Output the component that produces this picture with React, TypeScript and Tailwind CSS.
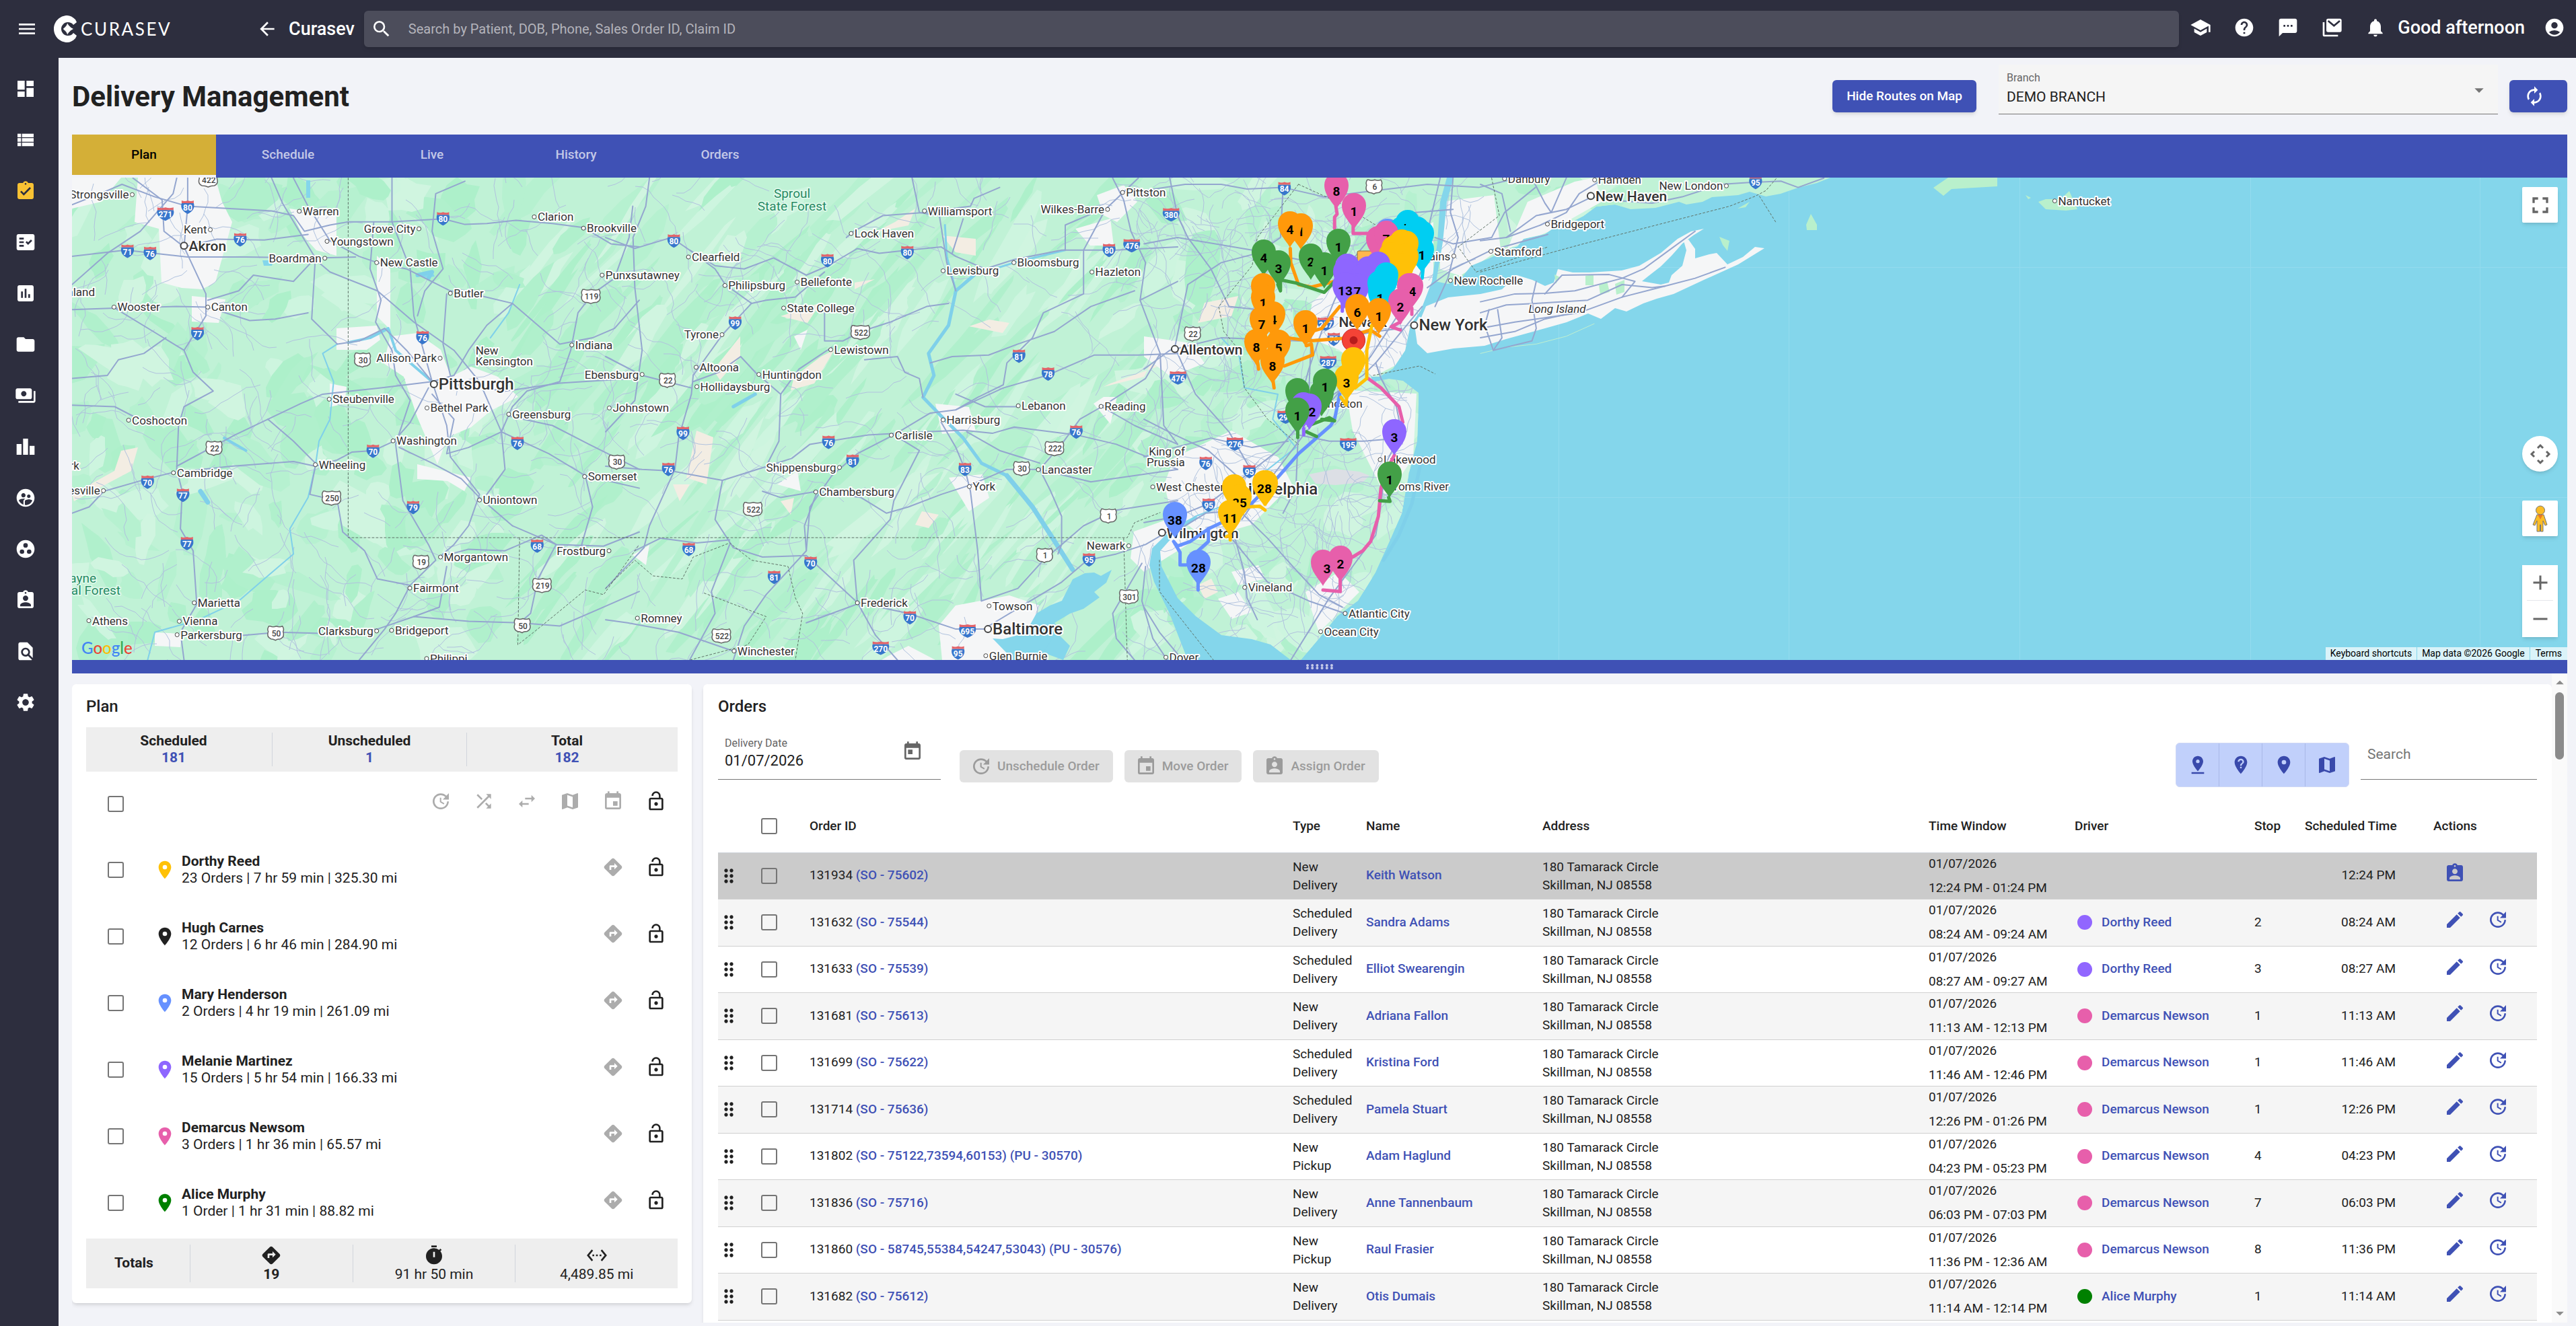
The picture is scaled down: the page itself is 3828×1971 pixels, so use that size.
import type { ReactNode } from "react";
import type { IconType } from "react-icons";
import {
  MdAccountCircle,
  MdAdd,
  MdArrowBack,
  MdArrowDropDown,
  MdArrowDropUp,
  MdAssessment,
  MdAssignmentInd,
  MdAssignmentTurnedIn,
  MdAutorenew,
  MdDashboard,
  MdDirections,
  MdDragIndicator,
  MdEdit,
  MdEvent,
  MdFactCheck,
  MdFindInPage,
  MdFolder,
  MdFullscreen,
  MdGroupWork,
  MdHelp,
  MdLeaderboard,
  MdLocationOn,
  MdLockOpen,
  MdMap,
  MdMenu,
  MdNotListedLocation,
  MdNotifications,
  MdPayments,
  MdPinDrop,
  MdRemove,
  MdSchool,
  MdSearch,
  MdSettings,
  MdSettingsEthernet,
  MdShuffle,
  MdSms,
  MdSupervisedUserCircle,
  MdSwapHoriz,
  MdToday,
  MdUpdate,
  MdViewList,
} from "react-icons/md";
import { clsx } from "clsx";

const NAV_ITEMS: { label: string; icon: IconType; active?: boolean }[] = [
  { label: "Dashboard", icon: MdDashboard },
  { label: "List", icon: MdViewList },
  { label: "Deliveries", icon: MdAssignmentTurnedIn, active: true },
  { label: "Checks", icon: MdFactCheck },
  { label: "Assessment", icon: MdAssessment },
  { label: "Files", icon: MdFolder },
  { label: "Payments", icon: MdPayments },
  { label: "Leaderboard", icon: MdLeaderboard },
  { label: "Users", icon: MdSupervisedUserCircle },
  { label: "Groups", icon: MdGroupWork },
  { label: "Patients", icon: MdAssignmentInd },
  { label: "Find", icon: MdFindInPage },
  { label: "Settings", icon: MdSettings },
];

const TABS = ["Plan", "Schedule", "Live", "History", "Orders"];

const DRIVERS = [
  { name: "Dorthy Reed", info: "23 Orders | 7 hr 59 min | 325.30 mi", pin: "text-[#ffc107]" },
  { name: "Hugh Carnes", info: "12 Orders | 6 hr 46 min | 284.90 mi", pin: "text-[#212121]" },
  { name: "Mary Henderson", info: "2 Orders | 4 hr 19 min | 261.09 mi", pin: "text-[#6691ff]" },
  { name: "Melanie Martinez", info: "15 Orders | 5 hr 54 min | 166.33 mi", pin: "text-[#8e66ff]" },
  { name: "Demarcus Newsom", info: "3 Orders | 1 hr 36 min | 65.57 mi", pin: "text-[#e75fab]" },
  { name: "Alice Murphy", info: "1 Order | 1 hr 31 min | 88.82 mi", pin: "text-[#008000]" },
];

interface Order {
  id: string;
  refs: string;
  type: [string, string];
  name: string;
  window: string;
  driver?: string;
  dot?: string;
  stop?: string;
  time: string;
}

const PURPLE = "bg-[#9166ff]";
const PINK = "bg-[#e75fab]";

const ORDERS: Order[] = [
  { id: "131934", refs: "(SO - 75602)", type: ["New", "Delivery"], name: "Keith Watson", window: "12:24 PM - 01:24 PM", time: "12:24 PM" },
  { id: "131632", refs: "(SO - 75544)", type: ["Scheduled", "Delivery"], name: "Sandra Adams", window: "08:24 AM - 09:24 AM", driver: "Dorthy Reed", dot: PURPLE, stop: "2", time: "08:24 AM" },
  { id: "131633", refs: "(SO - 75539)", type: ["Scheduled", "Delivery"], name: "Elliot Swearengin", window: "08:27 AM - 09:27 AM", driver: "Dorthy Reed", dot: PURPLE, stop: "3", time: "08:27 AM" },
  { id: "131681", refs: "(SO - 75613)", type: ["New", "Delivery"], name: "Adriana Fallon", window: "11:13 AM - 12:13 PM", driver: "Demarcus Newson", dot: PINK, stop: "1", time: "11:13 AM" },
  { id: "131699", refs: "(SO - 75622)", type: ["Scheduled", "Delivery"], name: "Kristina Ford", window: "11:46 AM - 12:46 PM", driver: "Demarcus Newson", dot: PINK, stop: "1", time: "11:46 AM" },
  { id: "131714", refs: "(SO - 75636)", type: ["Scheduled", "Delivery"], name: "Pamela Stuart", window: "12:26 PM - 01:26 PM", driver: "Demarcus Newson", dot: PINK, stop: "1", time: "12:26 PM" },
  { id: "131802", refs: "(SO - 75122,73594,60153) (PU - 30570)", type: ["New", "Pickup"], name: "Adam Haglund", window: "04:23 PM - 05:23 PM", driver: "Demarcus Newson", dot: PINK, stop: "4", time: "04:23 PM" },
  { id: "131836", refs: "(SO - 75716)", type: ["New", "Delivery"], name: "Anne Tannenbaum", window: "06:03 PM - 07:03 PM", driver: "Demarcus Newson", dot: PINK, stop: "7", time: "06:03 PM" },
  { id: "131860", refs: "(SO - 58745,55384,54247,53043) (PU - 30576)", type: ["New", "Pickup"], name: "Raul Frasier", window: "11:36 PM - 12:36 AM", driver: "Demarcus Newson", dot: PINK, stop: "8", time: "11:36 PM" },
  { id: "131682", refs: "(SO - 75612)", type: ["New", "Delivery"], name: "Otis Dumais", window: "11:14 AM - 12:14 PM", driver: "Alice Murphy", dot: "bg-[#008000]", stop: "1", time: "11:14 AM" },
];

/* ---------- Map data ---------- */

// Each sheet has its own grid; `x`/`y` is its origin and `kx`/`ky` its scale on the map
const SHEETS = {
  west: { x: 100, y: 260, kx: 0.5421, ky: 0.4656 },
  central: { x: 900, y: 260, kx: 0.5421, ky: 0.4656 },
  jersey: { x: 1700, y: 260, kx: 0.3827, ky: 0.4656 },
  coast: { x: 2200, y: 260, kx: 0.6378, ky: 0.4656 },
};

type Sheet = keyof typeof SHEETS;

function place(sheet: Sheet, x: number, y: number): [number, number] {
  const s = SHEETS[sheet];
  return [s.x + x * s.kx, s.y + y * s.ky];
}

function line(sheet: Sheet, coords: string): string {
  return coords
    .split(" ")
    .map((pair) => {
      const [x, y] = pair.split(",").map(Number);
      return place(sheet, x, y).map((n) => n.toFixed(1)).join(",");
    })
    .join(" ");
}

const MAINLAND =
  "M107 264H2720L2700 272 2672 279 2646 288 2624 292 2600 285 2583 290 2544 293 2530 300 2506 304 2495 300 2460 309 2423 311 2400 304 2372 307 2353 321 2328 334 2310 338 2296 348 2264 355 2255 366 2238 372 2213 384 2186 395 2171 414 2152 422 2132 418 2125 437 2112 460 2096 483 2088 521 2070 548 2050 560 2037 560 2040 568 2064 563 2085 566 2108 584 2108 600 2106 656 2094 702 2083 763 2067 800 2044 851 2018 893 1987 916 1960 949 1933 981H107Z";

const ISLANDS = [
  "M2152 442L2200 437 2232 430 2254 409 2277 416 2296 425 2309 420 2315 400 2337 405 2362 405 2410 402 2436 395 2468 376 2493 355 2513 344 2532 340 2516 350 2500 362 2484 380 2468 396 2450 410 2440 418 2468 423 2480 420 2484 409 2500 395 2506 372 2502 358 2509 356 2519 370 2519 384 2540 378 2551 376 2567 393 2590 382 2608 367 2622 369 2583 393 2532 416 2487 437 2462 444 2442 451 2417 463 2400 458 2379 474 2360 466 2328 479 2296 488 2238 504 2206 514 2160 518 2121 525 2106 511 2102 483 2117 456Z",
];

const GREEN_ISLANDS = [
  "M2873 279L2888 291 2900 281 2968 277V264H2895Z",
  "M3029 300L3040 296 3062 296 3075 284 3087 311 3070 313 3040 311Z",
  "M2691 318L2700 334 2700 342 2685 342 2684 334Z",
  "M2555 352L2570 358 2567 373 2560 364Z",
  "M2582 310L2600 300 2594 308Z",
  "M3010 290L3018 294 3014 296Z",
];

const WATER = [
  "M1918 981L1888 958 1860 950 1815 944 1777 916 1750 889 1726 842 1724 819 1748 792 1780 770 1776 767 1744 784 1712 815 1708 840 1715 865 1738 912 1765 981Z",
  "M1594 861L1612 852 1626 851 1636 856 1652 847 1644 866 1626 880 1634 888 1610 905 1590 912 1567 926 1580 940 1572 949 1550 981H1506L1475 949 1490 950 1513 944 1530 930 1540 912 1560 900 1578 893Z",
  "M2150 264L2140 300 2136 360 2128 418 2108 470 2112 472 2134 420 2144 360 2150 300 2160 264Z",
  "M455 268h6v26h-6zM392 395h12l2-8h-16zM622 407l20-4 4 8-16 2zM1550 970l20-30 20 20-10 21z",
];

const URBAN = [
  "M205 264H320L330 300 345 330 320 420 300 430 270 428 240 420 236 340 200 330Z",
  "M107 264H180L150 300 107 310Z",
  "M430 310L500 320 500 380 470 372 450 350 440 330Z",
  "M285 440L335 445 325 480 285 478Z",
  "M500 488L560 484 565 505 545 520 500 520Z",
  "M580 500L620 495 655 520 670 560 700 545 740 560 770 590 730 610 700 635 665 650 650 690 620 620 600 560 570 540Z",
  "M490 570L515 575 512 600 490 605Z",
  "M560 380L580 400 580 490 560 470Z",
  "M620 690L700 710 690 730 665 715 620 712Z",
  "M230 940L270 942 268 962 230 960Z",
  "M1598 340L1650 325 1655 365 1620 365Z",
  "M1630 290L1670 275 1690 300 1660 330 1640 320Z",
  "M1700 500L1770 510 1790 540 1740 560 1700 530Z",
  "M1640 590L1660 590 1650 630 1625 600Z",
  "M1390 600L1440 605 1450 640 1400 645Z",
  "M1410 710L1460 705 1470 740 1440 760Z",
  "M1685 790L1740 770 1780 800 1700 850 1680 830Z",
  "M1745 680L1830 640 1900 680 1920 720 1860 780 1790 800 1740 760 1730 720Z",
  "M1420 900L1500 885 1545 900 1530 940 1490 981H1400L1395 930Z",
  "M1320 975L1350 960 1390 981H1310Z",
  "M1980 420L2060 370 2130 330 2130 480 2080 540 2040 560 1990 520 1940 500 1950 450Z",
  "M2000 580L2105 585 2100 680 2060 740 2040 700 2010 640Z",
  "M2140 300L2220 290 2230 370 2170 410 2140 400Z",
  "M2270 300L2340 270 2370 264 2380 300 2300 345 2240 370Z",
  "M1940 880L1990 850 2020 880 1960 940Z",
  "M1810 890L1840 880 1860 910 1830 920Z",
  "M1830 850L1870 840 1880 860 1840 870Z",
  "M1180 500L1200 490 1190 520Z",
  "M1155 720L1185 700 1190 730Z",
  "M940 825L965 810 960 840Z",
];

const SAND = [
  "M180 670L205 665 195 700 110 745 107 735 170 700Z",
  "M1035 640L1060 650 1050 720 1020 710Z",
  "M1180 560L1220 530 1240 520 1210 570 1175 580Z",
  "M1160 470L1220 450 1200 480Z",
  "M1060 550L1100 500 1100 530 1070 565Z",
  "M1330 330L1360 310 1350 335 1300 345Z",
  "M1400 350L1450 355 1450 380 1420 375Z",
  "M1270 420L1300 415 1270 430Z",
  "M1470 475L1500 480 1490 495 1440 485Z",
  "M1700 560L1710 540 1720 545 1650 570 1640 575Z",
  "M1370 760L1395 765 1380 785 1360 780Z",
  "M1160 745L1180 740 1175 765Z",
  "M1000 720L1025 720 1010 745Z",
  "M1780 870L1800 860 1810 880 1790 890Z",
  "M1790 450L1840 440 1830 470 1780 480Z",
];

const HIGHWAYS: [Sheet, string][] = [
  ["west", "13,95 90,60 150,30 240,70 330,100 560,115 620,130 650,180 720,160 770,150 890,150 1030,140 1090,158 1150,155 1230,145 1330,155 1415,168 1490,220 1568,230"],
  ["west", "13,350 110,250 200,180 290,60 300,10"],
  ["west", "13,260 160,240 330,262 490,262 680,265 790,262"],
  ["west", "180,10 260,80 265,180 320,230 410,205 540,208 660,190"],
  ["west", "330,10 330,100 320,230 380,380 380,450 320,560 345,630 400,690 320,740 305,800 300,940 315,1010 310,1130 345,1200 355,1370 310,1460 320,1549"],
  ["west", "13,1080 60,1060 100,1010 220,970 290,950 450,930 620,915 680,930 740,910 780,885 840,880 895,850 940,790 990,680"],
  ["west", "840,150 830,300 860,400 845,470 890,560 900,640 940,720 900,860 920,1040 990,1180 1010,1230 940,1310 900,1400 870,1450 800,1549"],
  ["west", "620,10 660,100 720,210 800,260 850,280 930,300 1050,370"],
  ["west", "680,270 720,310 850,370 950,470 1060,560 1130,660 1190,820 1320,890 1420,960 1568,1000"],
  ["west", "560,10 590,90 680,265 670,460 740,540 800,530 870,490 930,560 1000,660"],
  ["west", "1000,660 1060,640 1100,560 1150,480 1220,410 1350,540 1440,520 1500,490 1568,400"],
  ["west", "1050,370 1130,385 1220,410"],
  ["west", "890,10 890,150 940,300 950,450 1000,660 1040,800 1050,900 1130,1020 1100,1120 1060,1180 1020,1220"],
  ["west", "910,870 1000,920 1080,970 1130,1030 1220,1120 1340,1180"],
  ["west", "1020,1220 1100,1195 1200,1200 1300,1150 1340,1180 1470,1185 1568,1140"],
  ["west", "550,780 640,730 700,700 860,680 1000,660 1200,690 1350,665 1480,655 1568,650"],
  ["west", "550,780 620,850 680,920"],
  ["west", "13,735 130,740 180,770"],
  ["west", "550,780 460,830 300,930"],
  ["west", "13,430 130,425 300,420 385,422 500,465 570,460 660,440"],
  ["west", "130,425 250,510 320,560"],
  ["west", "385,400 470,370 510,320 620,340 680,265"],
  ["west", "13,650 110,640 140,590 210,570 270,520"],
  ["west", "320,1470 480,1470 580,1460 730,1465 850,1450 950,1410 1100,1425 1240,1430 1350,1440 1450,1390 1568,1330"],
  ["west", "680,930 665,1020 740,1040 755,1140 815,1200 850,1290 940,1310"],
  ["west", "1340,1180 1290,1290 1270,1400 1240,1430"],
  ["west", "1420,960 1440,1060 1410,1180"],
  ["west", "1190,820 1220,740 1260,690 1350,660 1380,560 1400,440 1440,380 1500,330 1540,200 1550,100"],
  ["west", "1190,820 1100,870 1040,890 1060,780 1000,700"],
  ["west", "1210,770 1330,800 1430,860 1568,940"],
  ["west", "960,450 980,370 1030,300 1000,180 1010,60 1090,20"],
  ["west", "1040,380 1030,540 1050,640"],
  ["west", "1150,1020 1200,940 1190,820"],
  ["west", "950,1410 1020,1380 1040,1250"],
  ["central", "0,200 80,235 180,200 230,240 300,290 380,300 460,265 550,320 610,290 690,235 750,250 830,240 920,230 960,260 1040,300 1120,270 1250,240 1400,240 1568,230"],
  ["central", "328,350 400,410 320,510 240,640 235,700 200,840 190,940 120,1120 105,1190 0,1320"],
  ["central", "230,240 300,300 328,350"],
  ["central", "400,410 440,400 520,390 600,310"],
  ["central", "0,930 100,940 180,945 320,975 430,935 510,905 560,860 720,830 880,820 980,815 1060,825 1120,805 1290,830 1400,860 1568,940"],
  ["central", "350,1549 380,1440 440,1340 550,1200 560,1060 620,960 690,890 790,830 890,760 960,750 1020,710 1090,670 1100,600 1170,520 1200,440 1310,380 1310,240 1370,110 1460,10"],
  ["central", "960,750 1090,680 1210,640 1340,575 1460,575 1568,570"],
  ["central", "1390,10 1420,80 1440,180 1480,280 1465,400 1520,570 1530,800 1568,860"],
  ["central", "920,790 960,870 985,940 1000,1010 1020,1200 1030,1360"],
  ["central", "320,975 300,1100 350,1190 430,1220 550,1215 620,1290 690,1365 830,1400 960,1450 1050,1450"],
  ["central", "80,1200 150,1160 250,1175 340,1165"],
  ["central", "690,1365 680,1230 780,1100 790,1040 860,880 790,830"],
  ["central", "690,1365 740,1470 800,1549"],
  ["central", "1050,1440 1150,1370 1250,1300 1320,1230 1400,1210 1480,1180 1568,1120"],
  ["central", "600,440 600,530 650,530 700,500 780,470 880,420 940,410"],
  ["central", "440,930 475,850 480,700 530,620 620,550"],
  ["central", "660,200 680,180 760,130 870,120"],
  ["central", "840,10 860,120 915,130 935,280 960,370"],
  ["central", "870,120 1000,100 1010,75 1080,40"],
  ["central", "980,140 950,250"],
  ["central", "430,1010 480,1030 580,1010 700,1030 770,1080 830,1060 920,1020 1000,990 1100,940 1190,940 1330,980 1568,940"],
  ["central", "1190,940 1250,860 1300,780 1360,740 1480,650 1520,570"],
  ["central", "1360,740 1450,800 1568,860"],
  ["central", "1190,940 1220,1010 1250,1090 1250,1180 1240,1210"],
  ["central", "1030,1360 1130,1320 1200,1230 1310,1120 1400,1070 1568,1040"],
  ["central", "120,10 110,100 75,200 80,360 100,560 80,720 0,820"],
  ["central", "0,1420 60,1430 200,1460 350,1520"],
  ["central", "240,660 310,630 370,580 410,630 480,700"],
  ["central", "0,580 100,640 235,680"],
  ["central", "890,600 950,580 1050,575 1130,540 1230,500 1330,420 1450,370"],
  ["central", "710,590 800,580 820,630 860,650 870,710"],
  ["central", "960,700 1040,740 1130,740"],
  ["central", "990,820 1080,880 1190,920"],
  ["central", "1450,1549 1400,1480 1390,1400 1470,1240"],
  ["central", "1480,1250 1470,1360 1500,1480 1540,1549"],
  ["central", "550,1430 690,1370"],
  ["central", "550,1200 545,1120 580,1010"],
  ["central", "230,1549 300,1400 290,1330 340,1180"],
  ["central", "1260,240 1260,160 1340,120"],
  ["central", "1465,400 1568,340"],
  ["jersey", "0,1110 130,1090 250,1050 330,1000 410,950 520,880 600,800"],
  ["jersey", "0,620 100,560 300,520 600,530 770,520 900,500 1000,490"],
  ["jersey", "0,220 130,200 420,240 600,270 800,260 1000,290"],
  ["jersey", "600,740 640,620 690,500 740,400 820,260 900,180 1050,120 1200,110"],
  ["jersey", "380,1100 500,960 620,830 760,690 880,580 960,480 1040,380 1080,300 1110,150 1150,10"],
  ["jersey", "1080,420 980,520 900,600 920,650 980,740 1000,820 940,920 920,1050 900,1150 810,1250 720,1350 570,1549"],
  ["jersey", "380,1080 480,1160 600,1270 680,1340 770,1380"],
  ["jersey", "340,1120 390,1270 400,1350 440,1420"],
  ["jersey", "600,830 720,850 850,850 1010,840"],
  ["jersey", "0,50 160,30 300,30 400,45 540,40 700,70 900,50 1100,30 1300,40 1450,10"],
  ["jersey", "100,10 130,130 170,200 260,300 330,420 440,430"],
  ["jersey", "540,40 530,200 440,250 300,280 170,350 120,550"],
  ["jersey", "650,500 640,700 600,800 590,1000 540,1080"],
  ["jersey", "120,550 200,700 330,820 400,920 460,1000"],
  ["jersey", "0,780 120,830 250,880 360,960"],
  ["jersey", "0,900 120,870 260,840 420,870 560,850"],
  ["jersey", "120,1140 240,1080 380,1070"],
  ["jersey", "0,1380 60,1460 150,1549"],
  ["jersey", "340,1160 480,1300 640,1360 780,1400"],
  ["jersey", "1200,10 1190,120 1220,200 1180,330 1130,420"],
  ["jersey", "1100,360 1200,300 1350,240 1568,190"],
  ["jersey", "1130,200 1200,220 1350,200 1400,120 1520,40"],
  ["jersey", "700,720 850,640 900,600"],
  ["coast", "0,210 60,200 130,130 200,110 260,70 300,80 400,90 470,70 560,30 620,25 700,20 740,40 800,10"],
  ["coast", "60,200 80,190 140,160 200,120 230,60 290,10"],
  ["coast", "0,30 50,60 70,180"],
  ["coast", "120,10 150,90 165,120 200,10"],
  ["coast", "0,405 80,380 150,378 220,370 330,330 380,300 430,250 500,180"],
  ["coast", "0,440 60,415 130,410 250,400 330,350 400,360 430,355 500,330 570,295"],
  ["coast", "0,490 80,470 130,460 230,440 330,390 430,355"],
  ["coast", "0,520 80,500 150,460 200,445"],
  ["coast", "20,430 10,480 30,560 120,530 130,490 120,400 130,340"],
  ["coast", "40,430 50,520 30,560"],
  ["coast", "150,380 190,320 300,318 360,340 330,390"],
];

const RIVERS: [Sheet, string, number][] = [
  ["west", "740,540 700,570 730,660 720,780 690,850 680,930 660,1030 610,1130 620,1210 540,1290 470,1360 360,1420 240,1460 220,1549", 2],
  ["west", "770,535 830,520 880,490 900,560 950,610 1000,660", 4],
  ["west", "960,320 1000,310 990,330", 6],
  ["west", "430,840 490,880", 4],
  ["west", "365,1010 385,1045", 7],
  ["west", "1160,520 1210,440 1240,350", 2],
  ["central", "1280,1260 1220,1150 1170,1060 1100,960", 7],
  ["central", "1100,960 1030,920 980,840 920,770 870,710 900,640 885,570 940,480 960,370 1010,320", 5],
  ["central", "1010,320 1120,280 1260,240", 3],
  ["central", "960,370 935,260 930,160", 3],
  ["central", "350,740 410,700", 5],
  ["jersey", "120,1150 200,1090 360,1040 450,960 590,870 500,780 520,700 390,680 370,580 300,520", 2],
  ["jersey", "1080,900 1040,1050 990,1150 930,1230", 5],
  ["coast", "0,570 60,550 130,540 200,515 265,475", 0],
];

const BORDERS: [Sheet, string][] = [
  ["west", "770,10 770,1158 1568,1158"],
  ["west", "1240,1158 1235,1500 1300,1440 1420,1325 1470,1340 1568,1180"],
  ["central", "0,1158 1430,1158 1450,1110 1520,1078"],
  ["central", "1420,1160 1430,1549"],
  ["central", "0,1320 80,1230 130,1280 210,1290 240,1220 340,1175 400,1230 500,1250 520,1350 540,1400 520,1549"],
  ["central", "270,1335 440,1410 390,1500 230,1549"],
  ["jersey", "600,30 760,90 900,160 1090,260"],
  ["jersey", "600,30 440,200 420,290 290,420 310,500 370,560 390,680 480,780 600,860"],
  ["jersey", "890,640 1070,610 1130,635"],
  ["jersey", "1350,10 1380,130 1220,230 1290,310 1568,230"],
  ["jersey", "60,1230 60,1330 270,1549"],
  ["coast", "0,310 240,220 580,100 640,68 665,50 690,10"],
  ["coast", "650,68 690,155"],
];

interface Town {
  at: [Sheet, number, number];
  name: string;
  left?: boolean;
  size?: "md" | "lg";
  plain?: boolean;
}

const TOWNS: Town[] = [
  { at: ["west", 178, 63], name: "Strongsville", left: true },
  { at: ["west", 320, 226], name: "Akron", size: "md" },
  { at: ["west", 392, 175], name: "Kent", left: true },
  { at: ["west", 636, 116], name: "Warren" },
  { at: ["west", 712, 212], name: "Youngstown" },
  { at: ["west", 706, 266], name: "Boardman", left: true },
  { at: ["west", 964, 172], name: "Grove City", left: true },
  { at: ["west", 848, 280], name: "New Castle" },
  { at: ["west", 1280, 134], name: "Clarion" },
  { at: ["west", 1415, 170], name: "Brookville" },
  { at: ["west", 1466, 320], name: "Punxsutawney" },
  { at: ["west", 1050, 378], name: "Butler" },
  { at: ["west", 128, 422], name: "Wooster" },
  { at: ["west", 385, 422], name: "Canton" },
  { at: ["west", 85, 373], name: "Ashland", left: true, plain: true },
  { at: ["west", 1022, 585], name: "Allison Park", left: true },
  { at: ["west", 1110, 561], name: "New", plain: true },
  { at: ["west", 1110, 596], name: "Kensington", plain: true },
  { at: ["west", 1383, 543], name: "Indiana" },
  { at: ["west", 1005, 668], name: "Pittsburgh", size: "lg" },
  { at: ["west", 986, 744], name: "Bethel Park" },
  { at: ["west", 718, 716], name: "Steubenville" },
  { at: ["west", 1210, 764], name: "Greensburg" },
  { at: ["central", 100, 637], name: "Ebensburg", left: true },
  { at: ["west", 168, 783], name: "Coshocton" },
  { at: ["west", 893, 849], name: "Washington" },
  { at: ["west", 680, 925], name: "Wheeling" },
  { at: ["west", 291, 951], name: "Cambridge" },
  { at: ["west", 99, 1008], name: "Zanesville", left: true },
  { at: ["west", 42, 928], name: "Newark", left: true, plain: true },
  { at: ["west", 1130, 1038], name: "Uniontown" },
  { at: ["west", 1418, 963], name: "Somerset" },
  { at: ["west", 1023, 1220], name: "Morgantown" },
  { at: ["west", 1485, 1200], name: "Frostburg", left: true },
  { at: ["west", 939, 1319], name: "Fairmont" },
  { at: ["west", 348, 1366], name: "Marietta" },
  { at: ["west", 59, 1423], name: "Athens" },
  { at: ["west", 307, 1425], name: "Vienna" },
  { at: ["west", 301, 1468], name: "Parkersburg" },
  { at: ["west", 848, 1456], name: "Clarksburg", left: true },
  { at: ["west", 889, 1454], name: "Bridgeport" },
  { at: ["west", 985, 1544], name: "Philippi" },
  { at: ["central", 10, 744], name: "Johnstown" },
  { at: ["central", 227, 262], name: "Clearfield" },
  { at: ["central", 327, 353], name: "Philipsburg" },
  { at: ["central", 525, 342], name: "Bellefonte" },
  { at: ["central", 488, 425], name: "State College" },
  { at: ["central", 319, 510], name: "Tyrone", left: true },
  { at: ["central", 248, 614], name: "Altoona" },
  { at: ["central", 250, 676], name: "Hollidaysburg" },
  { at: ["central", 420, 637], name: "Huntingdon" },
  { at: ["central", 617, 558], name: "Lewistown" },
  { at: ["central", 673, 187], name: "Lock Haven" },
  { at: ["central", 874, 115], name: "Williamsport" },
  { at: ["central", 925, 306], name: "Lewisburg" },
  { at: ["central", 1119, 280], name: "Bloomsburg" },
  { at: ["central", 1333, 310], name: "Hazleton" },
  { at: ["central", 1376, 110], name: "Wilkes-Barre", left: true },
  { at: ["central", 1417, 56], name: "Pittston" },
  { at: ["central", 925, 782], name: "Harrisburg" },
  { at: ["central", 783, 831], name: "Carlisle" },
  { at: ["central", 1131, 737], name: "Lebanon" },
  { at: ["central", 1358, 739], name: "Reading" },
  { at: ["central", 641, 934], name: "Shippensburg", left: true },
  { at: ["central", 576, 1012], name: "Chambersburg" },
  { at: ["central", 1186, 941], name: "Lancaster" },
  { at: ["central", 997, 995], name: "York" },
  { at: ["central", 1434, 1184], name: "Newark", left: true },
  { at: ["central", 690, 1366], name: "Frederick" },
  { at: ["central", 1051, 1376], name: "Towson" },
  { at: ["central", 1048, 1450], name: "Baltimore", size: "lg" },
  { at: ["central", 1042, 1535], name: "Glen Burnie" },
  { at: ["central", 87, 1415], name: "Romney" },
  { at: ["central", 352, 1520], name: "Winchester" },
  { at: ["jersey", 120, 556], name: "Allentown", size: "md" },
  { at: ["jersey", 172, 883], name: "King of", left: true, plain: true },
  { at: ["jersey", 172, 917], name: "Prussia", left: true, plain: true },
  { at: ["jersey", 34, 996], name: "West Chester" },
  { at: ["jersey", 311, 1003], name: "Philadelphia", size: "lg", plain: true },
  { at: ["jersey", 70, 1142], name: "Wilmington", size: "md" },
  { at: ["jersey", 391, 1317], name: "Vineland" },
  { at: ["jersey", 85, 1540], name: "Dover" },
  { at: ["jersey", 781, 1400], name: "Atlantic City" },
  { at: ["jersey", 686, 1458], name: "Ocean City" },
  { at: ["jersey", 917, 909], name: "Lakewood" },
  { at: ["jersey", 950, 995], name: "Toms River", plain: true },
  { at: ["jersey", 646, 730], name: "Princeton", plain: true },
  { at: ["jersey", 738, 468], name: "Newark", size: "md", plain: true },
  { at: ["jersey", 1049, 480], name: "New York", size: "lg" },
  { at: ["jersey", 1190, 337], name: "New Rochelle" },
  { at: ["jersey", 1203, 259], name: "White Plains", left: true },
  { at: ["jersey", 1347, 244], name: "Stamford" },
  { at: ["jersey", 1400, 12], name: "Danbury" },
  { at: ["coast", 156, 157], name: "Bridgeport" },
  { at: ["coast", 257, 67], name: "New Haven", size: "md" },
  { at: ["coast", 266, 16], name: "Hamden" },
  { at: ["coast", 573, 35], name: "New London", left: true },
  { at: ["coast", 1338, 83], name: "Nantucket" },
];

const INTERSTATES: [string, Sheet, number, number][] = [
  ["271", "west", 269, 125], ["80", "west", 330, 103], ["76", "west", 474, 207], ["71", "west", 165, 244],
  ["76", "west", 227, 251], ["80", "west", 1030, 140], ["77", "west", 357, 507], ["76", "west", 974, 520],
  ["70", "west", 838, 882], ["76", "west", 1234, 857], ["70", "west", 220, 981], ["77", "west", 317, 1023],
  ["79", "west", 948, 1062], ["77", "west", 328, 1177], ["68", "west", 1288, 1185], ["80", "central", 187, 211],
  ["80", "central", 608, 274], ["80", "central", 827, 248], ["99", "central", 355, 473], ["80", "central", 1380, 241],
  ["476", "central", 1442, 226], ["380", "central", 1550, 127], ["81", "central", 1133, 579], ["78", "central", 1213, 636],
  ["99", "central", 212, 825], ["76", "central", 611, 854], ["76", "central", 1290, 821], ["81", "central", 677, 914],
  ["83", "central", 985, 940], ["76", "central", 172, 940], ["68", "central", 228, 1196], ["70", "central", 562, 1240],
  ["81", "central", 462, 1285], ["95", "central", 1325, 1229], ["70", "central", 834, 1414], ["695", "central", 992, 1456],
  ["270", "central", 754, 1511], ["95", "central", 966, 1526], ["84", "jersey", 545, 44], ["476", "jersey", 132, 648],
  ["276", "jersey", 353, 859], ["76", "jersey", 240, 921], ["95", "jersey", 409, 947], ["95", "jersey", 251, 1054],
  ["195", "jersey", 793, 861], ["287", "jersey", 705, 476], ["78", "jersey", 737, 525], ["287", "jersey", 715, 599],
  ["295", "jersey", 550, 773], ["95", "coast", 641, 24],
];

const US_ROUTES: [string, Sheet, number, number][] = [
  ["422", "west", 388, 15], ["119", "west", 1437, 387], ["30", "west", 811, 590], ["22", "west", 404, 872],
  ["30", "west", 1508, 916], ["250", "west", 726, 1031], ["19", "west", 971, 1236], ["219", "west", 1303, 1310],
  ["50", "west", 1249, 1438], ["50", "west", 573, 1462], ["522", "central", 700, 502], ["22", "central", 171, 655],
  ["30", "central", 1142, 937], ["222", "central", 1232, 873], ["522", "central", 405, 1067], ["1", "central", 1380, 1088],
  ["1", "central", 1205, 1214], ["301", "central", 1436, 1346], ["522", "central", 319, 1471], ["22", "jersey", 191, 507],
  ["6", "jersey", 896, 37],
];

const C = {
  pink: "#e75fab",
  orange: "#ff990a",
  green: "#43a047",
  yellow: "#ffc107",
  purple: "#8e66ff",
  cyan: "#00cef2",
  blue: "#6691ff",
};

const ROUTES: [string, string][] = [
  [C.blue, "760,700 740,780 725,800 600,890 520,965 410,1055 380,1080 250,1130 180,1170 130,1185 115,1170 140,1205 140,1245 165,1245"],
  [C.blue, "250,1130 250,1170 210,1200"],
  [C.blue, "210,1290 210,1325"],
  [C.pink, "870,650 920,680 990,740 1005,790"],
  [C.pink, "972,895 950,930 920,1000 910,1090 880,1170 850,1200 810,1220"],
  [C.pink, "762,1290 762,1330 695,1325"],
  [C.pink, "745,100 750,125 740,135 740,170"],
  [C.pink, "812,165 812,187 870,187"],
  [C.pink, "995,470 960,485 995,495"],
  [C.pink, "1040,425 1040,445"],
  [C.orange, "568,235 570,280 600,350 650,358 740,340"],
  [C.orange, "760,420 730,450 690,490 650,500"],
  [C.orange, "560,520 640,530 770,522 880,495 915,515"],
  [C.orange, "545,610 655,575 650,540 630,545"],
  [C.orange, "440,590 445,620"],
  [C.orange, "500,650 505,680"],
  [C.green, "520,350 530,370 530,335 590,345 700,375 740,340"],
  [C.green, "690,780 740,785 720,775 640,800"],
  [C.green, "597,820 597,838"],
  [C.green, "630,820 670,835"],
  [C.green, "950,1030 955,1042 915,1040"],
  [C.yellow, "885,480 865,560 865,650 820,680"],
  [C.yellow, "787,710 785,735 765,710"],
  [C.yellow, "400,1060 450,1058 470,1070"],
  [C.yellow, "320,1155 335,1150 335,1165"],
  [C.purple, "770,400 770,435"],
  [C.purple, "620,810 620,830"],
  [C.cyan, "1085,290 1080,330"],
];

// [colour, tip x, tip y, stop number], back to front; "none" leaves just the number
const PINS: [string, number, number, string][] = [
  [C.pink, 748, 110, "8"], [C.pink, 815, 174, "1"], [C.orange, 609, 238, "1"], [C.orange, 566, 233, "4"],
  [C.green, 755, 287, "1"], [C.green, 465, 323, "4"], [C.green, 522, 357, "3"], [C.green, 647, 336, "2"],
  [C.green, 700, 363, "1"], [C.blue, 945, 255, ""], [C.cyan, 1000, 250, ""], [C.cyan, 1025, 228, "7"],
  [C.cyan, 1060, 250, ""], [C.cyan, 1078, 262, ""], [C.cyan, 1068, 300, ""], [C.cyan, 1078, 313, "1"],
  [C.pink, 910, 280, ""], [C.pink, 940, 262, "7"], [C.yellow, 1000, 290, ""], [C.yellow, 1020, 295, ""],
  [C.yellow, 970, 310, ""], [C.yellow, 1020, 335, ""], [C.yellow, 960, 330, ""], [C.yellow, 1000, 365, ""],
  [C.purple, 790, 367, ""], [C.purple, 910, 360, ""], [C.purple, 870, 375, ""], [C.purple, 780, 385, ""],
  [C.purple, 850, 400, ""], [C.purple, 828, 430, ""], [C.purple, 795, 430, ""], [C.purple, 778, 428, ""],
  ["none", 780, 428, "13"], ["none", 828, 430, "7"],
  [C.cyan, 940, 395, ""], [C.cyan, 938, 410, ""], [C.cyan, 915, 420, ""], [C.cyan, 918, 452, "1"],
  [C.pink, 1038, 430, ""], [C.pink, 1030, 430, ""], ["none", 1042, 430, "4"], [C.pink, 995, 480, "2"],
  [C.orange, 828, 496, "6"], [C.orange, 912, 510, "1"], [C.orange, 463, 430, ""], [C.orange, 463, 466, "1"],
  [C.orange, 502, 520, "4"], [C.orange, 457, 535, "7"], [C.orange, 522, 610, "5"], [C.orange, 437, 608, "8"],
  [C.orange, 500, 668, "8"], [C.orange, 628, 547, "1"], [C.yellow, 812, 666, ""], [C.yellow, 787, 722, "3"],
  [C.green, 597, 765, ""], [C.green, 690, 770, ""], [C.green, 703, 735, "1"], [C.purple, 620, 810, ""],
  [C.purple, 642, 814, ""], [C.green, 596, 826, "1"], ["none", 654, 814, "2"], [C.purple, 972, 895, "3"],
  [C.green, 953, 1032, "1"], [C.yellow, 350, 1072, ""], [C.yellow, 370, 1104, "25"], [C.yellow, 335, 1153, "11"],
  [C.yellow, 472, 1058, ""], [C.yellow, 468, 1058, "28"], [C.blue, 119, 1160, "38"], [C.blue, 211, 1312, "28"],
  [C.pink, 762, 1300, "2"], [C.pink, 694, 1312, ""], ["none", 710, 1315, "3"],
];

// Small seeded generator, so the terrain is the same on each render
function seeded(seed: number) {
  let s = seed;
  return () => {
    s = (s * 16807) % 2147483647;
    return s / 2147483647;
  };
}

function makePatches() {
  const rand = seeded(41);
  const tones = ["#b0f0cc", "#cdf5df", "#b6f1d0", "#d0f5e0", "#adf0ca"];
  return Array.from({ length: 620 }, (_, i) => {
    const x = 107 + rand() * 2300;
    const y = 264 + rand() * 717;
    const ridge = x > 780 && x < 1700;
    const length = ridge ? 30 + rand() * 90 : 12 + rand() * 50;
    const width = ridge ? 4 + rand() * 14 : 8 + rand() * 26;
    const angle = ((ridge ? -38 - rand() * 22 : rand() * 180) * Math.PI) / 180;
    const points = Array.from({ length: 11 }, (_, k) => {
      const a = (k / 11) * Math.PI * 2;
      const r = 0.65 + rand() * 0.5;
      const px = Math.cos(a) * length * r;
      const py = Math.sin(a) * width * r;
      const qx = x + px * Math.cos(angle) - py * Math.sin(angle);
      const qy = y + px * Math.sin(angle) + py * Math.cos(angle);
      return `${qx.toFixed(0)},${qy.toFixed(0)}`;
    });
    return { points: points.join(" "), fill: tones[i % tones.length] };
  });
}

function makeLanes() {
  const rand = seeded(97);
  return Array.from({ length: 900 }, (_, i) => {
    // the east side of the map is built up more densely
    let x = i % 3 === 0 ? 1700 + rand() * 500 : 107 + rand() * 2000;
    let y = 264 + rand() * 717;
    let heading = rand() * Math.PI * 2;
    const points = [`${x.toFixed(0)},${y.toFixed(0)}`];
    const steps = 4 + Math.floor(rand() * 8);
    for (let k = 0; k < steps; k++) {
      heading += (rand() - 0.5) * 1.1;
      x += Math.cos(heading) * 11;
      y += Math.sin(heading) * 11;
      points.push(`${x.toFixed(0)},${y.toFixed(0)}`);
    }
    return points.join(" ");
  });
}

const PATCHES = makePatches();
const LANES = makeLanes();

/* ---------- Map pieces ---------- */

function TownLabel({ at, name, left, size, plain }: Town) {
  const [x, y] = place(...at);
  const r = size ? 5 : 3;
  return (
    <g>
      {!plain && <circle cx={x} cy={y} r={r} fill="#fff" stroke="#444" strokeWidth={size ? 2 : 1} />}
      <text
        x={left ? x - 5 : x + (size ? 7 : 5)}
        y={y + (size ? 8 : 6)}
        textAnchor={left ? "end" : "start"}
        fontSize={size === "lg" ? 24 : size === "md" ? 21 : 17}
        fontWeight={size ? 500 : 400}
        fill="#333"
        stroke="#fff"
        strokeWidth="4"
        strokeLinejoin="round"
        paintOrder="stroke"
      >
        {name}
      </text>
    </g>
  );
}

function InterstateShield({ num, x, y }: { num: string; x: number; y: number }) {
  const w = num.length > 2 ? 13 : 10;
  return (
    <g>
      <path
        d={`M${x - w + 1} ${y - 6}H${x + w - 1}Q${x + w + 2} ${y + 4} ${x} ${y + 10}Q${x - w - 2} ${y + 4} ${x - w + 1} ${y - 6}Z`}
        fill="#3776cc"
      />
      <path d={`M${x - w + 1} ${y - 10}q${w / 2} 2 ${w - 1} 0q${w / 2} 2 ${w - 1} 0v4h-${2 * w - 2}z`} fill="#e3646a" />
      <text x={x} y={y + 5} textAnchor="middle" fontSize="12" fontWeight="700" fill="#fff">
        {num}
      </text>
    </g>
  );
}

function RouteShield({ num, x, y }: { num: string; x: number; y: number }) {
  const w = num.length > 2 ? 13 : 11;
  return (
    <g>
      <path
        d={`M${x - w + 2} ${y - 10}q4 2 ${w - 2} 0q${w - 6} 2 ${w - 2} 0q3 4 1 8q3 8-4 11q-5 0-${w - 4} 2q-4-2-${w - 4} -2q-7-3-4-11q-2-4 1-8z`}
        fill="#fff"
        stroke="#666"
        strokeWidth="1.5"
      />
      <text x={x} y={y + 5} textAnchor="middle" fontSize="12" fontWeight="500" fill="#444">
        {num}
      </text>
    </g>
  );
}

function Pin({ color, x, y, label }: { color: string; x: number; y: number; label: string }) {
  return (
    <g>
      <path
        d={`M${x} ${y}C${x - 5} ${y - 10} ${x - 18} ${y - 20} ${x - 18} ${y - 36}A18 18 0 0 1 ${x + 18} ${y - 36}C${x + 18} ${y - 20} ${x + 5} ${y - 10} ${x} ${y}Z`}
        fill={color}
      />
      <text x={x} y={y - 20} textAnchor="middle" fontSize="19" fontWeight="700" fill="#000">
        {label}
      </text>
    </g>
  );
}

function DeliveryMap() {
  const [depotX, depotY] = place("jersey", 814, 528);
  return (
    <svg viewBox="107 264 3708 717" className="block w-full bg-[#84d6eb]" role="img" aria-label="Delivery routes">
      <defs>
        <clipPath id="land">
          <path d={MAINLAND} />
        </clipPath>
      </defs>
      <g stroke="#93dbee" strokeWidth="1">
        <path d="M2000 397.500H3815M2000 739.500H3815M2316.500 264V981M2658.500 264V981M3001.500 264V981M3344.500 264V981M3685.500 264V981" />
      </g>
      <path d={MAINLAND} fill="#c0f2d6" />
      <g clipPath="url(#land)">
        {PATCHES.map((p, i) => (
          <polygon key={i} points={p.points} fill={p.fill} />
        ))}
        {SAND.map((d) => (
          <path key={d} d={d} fill="#f3ede3" />
        ))}
        {URBAN.map((d) => (
          <path key={d} d={d} fill="#f5f6f7" />
        ))}
        <path d="M1945 705l40-8 35 4 15 6-10 10-40 4-30-2z" fill="#dcdfe5" />
        {LANES.map((points) => (
          <polyline key={points} points={points} fill="none" stroke="#b0c2de" strokeWidth="1" />
        ))}
      </g>
      {ISLANDS.map((d) => (
        <path key={d} d={d} fill="#f5f6f7" />
      ))}
      {GREEN_ISLANDS.map((d) => (
        <path key={d} d={d} fill="#b9f0cc" />
      ))}
      <g fill="#b9f0cc">
        <path d="M2356 410l12-2v16h-12zM2376 424l12-6 4 16-14 4zM2400 422l14-6v18l-12 4zM2310 408l8 4-6 10z" />
      </g>
      {WATER.map((d) => (
        <path key={d} d={d} fill="#84d6eb" />
      ))}
      <g fill="none" strokeLinejoin="round" strokeLinecap="round">
        {RIVERS.map(([sheet, coords, width]) => (
          <polyline
            key={coords}
            points={line(sheet, coords)}
            stroke={width ? "#7fd0ea" : "#c0f0cf"}
            strokeWidth={width || 1}
          />
        ))}
        {HIGHWAYS.map(([sheet, coords]) => (
          <polyline key={coords} points={line(sheet, coords)} stroke="#94a6cf" strokeWidth="2" />
        ))}
        {BORDERS.map(([sheet, coords]) => (
          <polyline key={coords} points={line(sheet, coords)} stroke="#5f7368" strokeWidth="1" strokeDasharray="3 3" />
        ))}
      </g>

      <g fontFamily="Roboto, sans-serif">
        {INTERSTATES.map(([num, sheet, px, py], i) => {
          const [x, y] = place(sheet, px, py);
          return <InterstateShield key={i} num={num} x={x} y={y} />;
        })}
        {US_ROUTES.map(([num, sheet, px, py], i) => {
          const [x, y] = place(sheet, px, py);
          return <RouteShield key={i} num={num} x={x} y={y} />;
        })}
        {TOWNS.map((town) => (
          <TownLabel key={town.at.join()} {...town} />
        ))}
        <g fill="#268a63" stroke="#e4fbee" strokeWidth="3" paintOrder="stroke" fontSize="19">
          <text x="1177" y="294" textAnchor="middle">Sproul</text>
          <text x="1177" y="313" textAnchor="middle">State Forest</text>
          <text x="143" y="866" textAnchor="end">Wayne</text>
          <text x="179" y="884" textAnchor="end">National Forest</text>
        </g>
        <text x="2314" y="465" textAnchor="middle" fontSize="17" fontStyle="italic" fill="#333" stroke="#fff" strokeWidth="3" paintOrder="stroke">
          Long Island
        </text>

        <g fill="none" strokeWidth="5" strokeLinejoin="round" strokeLinecap="round">
          {ROUTES.map(([color, coords]) => (
            <polyline key={coords} points={line("jersey", coords)} stroke={color} />
          ))}
        </g>
        <rect x="2017" y="373" width="40" height="16" rx="2" fill="#ffb74d" stroke="#8a6d3b" />
        <circle cx={depotX} cy={depotY} r="17" fill="#f44336" stroke="#c62828" />
        <circle cx={depotX} cy={depotY} r="6" fill="#b71c1c" />
        {PINS.map(([color, px, py, label], i) => {
          const [x, y] = place("jersey", px, py);
          return <Pin key={i} color={color} x={Math.round(x)} y={Math.round(y)} label={label} />;
        })}
      </g>
    </svg>
  );
}

function MapControls() {
  const box = "flex size-[53px] items-center justify-center bg-white text-[#666] shadow-md";
  return (
    <>
      <button aria-label="Toggle fullscreen" className={clsx(box, "absolute right-[14px] top-[14px] rounded-xs")}>
        <MdFullscreen className="size-10" />
      </button>
      <div className="absolute bottom-[34px] right-[14px] flex flex-col gap-[43px]">
        <button aria-label="Map camera controls" className={clsx(box, "rounded-full")}>
          <svg viewBox="0 0 32 32" className="size-8" fill="none" stroke="currentColor" strokeWidth="3">
            <path d="M12 7l4-4 4 4M12 25l4 4 4-4M7 12l-4 4 4 4M25 12l4 4-4 4" />
          </svg>
        </button>
        <button aria-label="Street View" className={clsx(box, "rounded-xs")}>
          <svg viewBox="0 0 24 40" className="h-10 w-6" stroke="#757575" strokeWidth="1">
            <path d="M7 14h10l5 15-3 1-3-7v16h-3.500v-10h-1v10H7V23l-3 7-3-1z" fill="#fbbc26" />
            <path d="M8 14h8l-4 7z" fill="#ea7a24" stroke="none" />
            <circle cx="12" cy="7.500" r="6.500" fill="#fbbc26" />
          </svg>
        </button>
        <div className="flex flex-col bg-white px-[7px] text-[#666] shadow-md">
          <button aria-label="Zoom in" className="flex h-[53px] items-center justify-center border-b border-gray-200">
            <MdAdd className="size-9" />
          </button>
          <button aria-label="Zoom out" className="flex h-[54px] items-center justify-center">
            <MdRemove className="size-9" />
          </button>
        </div>
      </div>
      <div className="absolute bottom-0 right-0 flex gap-px text-[14px] leading-[19px] text-black">
        <button className="bg-white/70 px-[7px]">Keyboard shortcuts</button>
        <span className="bg-white/70 px-[7px]">Map data ©2026 Google</span>
        <a href="#terms" className="bg-white/70 px-2">Terms</a>
      </div>
      <a href="#google" className="absolute bottom-0 left-[14px] font-[Lato,sans-serif] text-2xl leading-9 font-medium">
        <span className="text-[#4285f4]">G</span>
        <span className="text-[#ea4335]">o</span>
        <span className="text-[#fbbc05]">o</span>
        <span className="text-[#4285f4]">g</span>
        <span className="text-[#34a853]">l</span>
        <span className="text-[#ea4335]">e</span>
      </a>
    </>
  );
}

/* ---------- Shared controls ---------- */

function Checkbox({ label }: { label: string }) {
  return (
    <input
      type="checkbox"
      aria-label={label}
      className="block size-6 shrink-0 appearance-none rounded-[3px] border-2 border-[#757575] checked:bg-[#3f51b5]"
    />
  );
}

function IconButton({ label, icon: Icon, className }: { label: string; icon: IconType; className?: string }) {
  return (
    <button aria-label={label} className={clsx("flex size-16 items-center justify-center", className)}>
      <Icon className="size-8" />
    </button>
  );
}

function StackedMailIcon({ className }: { className?: string }) {
  return (
    <svg viewBox="0 0 24 24" className={className}>
      <path d="M8 2h13a2 2 0 0 1 2 2v11a2 2 0 0 1-2 2H8a2 2 0 0 1-2-2V4a2 2 0 0 1 2-2z" fill="currentColor" />
      <path d="M8 4.500l6.500 5.500 6.500-5.500" fill="none" stroke="#2d2e3e" strokeWidth="2" />
      <path d="M3 6v14a1 1 0 0 0 1 1h15" fill="none" stroke="currentColor" strokeWidth="2" />
    </svg>
  );
}

function StopwatchIcon({ className }: { className?: string }) {
  return (
    <svg viewBox="0 0 24 24" className={className} fill="currentColor">
      <path d="M9 1h6v2H9z" />
      <path
        fillRule="evenodd"
        d="M19.030 7.390l1.420-1.420c-.43-.51-.9-.99-1.410-1.410l-1.420 1.420A8.962 8.962 0 0 0 12 4a9 9 0 1 0 9 9c0-2.120-.74-4.070-1.970-5.610zM13 14h-2V8h2z"
      />
    </svg>
  );
}

/* ---------- Layout ---------- */

function Logo() {
  return (
    <div className="flex items-center gap-1 text-white">
      <svg viewBox="0 0 36 40" className="h-10 w-9" fill="currentColor">
        <path d="M32 6C28 2 24 0 20 0 9 0 0 9 0 20s9 20 20 20c4 0 8-2 12-6l2-4-5-4c-2 3-5 4-8 4-6 0-10-5-10-10s4-10 10-10c3 0 6 1 8 4l5-4z" />
        <path d="M20 10c2 5 4 7 10 10-6 3-8 5-10 10-1-5-3-7-7-10 4-3 6-5 7-10z" stroke="#2d2e3e" strokeWidth="1" />
      </svg>
      <span className="font-[Lato,sans-serif] text-[26px] tracking-widest">CURASEV</span>
    </div>
  );
}

function TopBar() {
  return (
    <header className="flex h-[86px] shrink-0 items-center bg-[#2d2e3e] pr-4 text-white">
      <div className="flex w-[381px] shrink-0 items-center gap-6 pl-6">
        <button aria-label="Menu">
          <MdMenu className="size-8" />
        </button>
        <Logo />
      </div>
      <button aria-label="Back" className="mr-4">
        <MdArrowBack className="size-8" />
      </button>
      <span className="mr-[14px] text-[27px] font-medium">Curasev</span>
      <label className="flex h-[54px] grow items-center gap-6 rounded-md bg-[#4c4d5b] px-[10px] shadow-md">
        <MdSearch className="size-8 shrink-0" />
        <input
          type="search"
          aria-label="Search records"
          placeholder="Search by Patient, DOB, Phone, Sales Order ID, Claim ID"
          className="grow bg-transparent text-[20px] outline-none placeholder:text-[#b4b4bb]"
        />
      </label>
      <div className="flex shrink-0 items-center gap-px pb-1">
        <IconButton label="Training" icon={MdSchool} />
        <IconButton label="Help" icon={MdHelp} />
        <IconButton label="Messages" icon={MdSms} />
        <button aria-label="Mail" className="flex size-16 items-center justify-center">
          <StackedMailIcon className="size-8" />
        </button>
        <IconButton label="Notifications" icon={MdNotifications} />
        <span className="mr-[27px] text-[27px] font-medium">Good afternoon</span>
        <button aria-label="Account">
          <MdAccountCircle className="size-8" />
        </button>
      </div>
    </header>
  );
}

function SideNav() {
  return (
    <nav className="flex w-[87px] shrink-0 flex-col items-center gap-11 bg-[#2d2e3e] pr-3 pt-[30px] text-white">
      {NAV_ITEMS.map(({ label, icon: Icon, active }) => (
        <a key={label} href={`#${label.toLowerCase()}`} aria-label={label}>
          <Icon className={clsx("size-8", active && "text-[#f9c233]")} />
        </a>
      ))}
    </nav>
  );
}

function PageHeader() {
  return (
    <div className="flex min-h-[114px] shrink-0 items-center">
      <h1 className="grow text-[42px] font-bold">Delivery Management</h1>
      <button className="h-12 rounded-md bg-[#3f51b5] px-[21px] text-[19px] font-medium text-white shadow-md">
        Hide Routes on Map
      </button>
      <div className="relative mb-5 ml-[33px] mr-[17px] flex h-[74px] w-[742px] flex-col border-b border-[#777] bg-[#f5f5f5] pl-3 pt-2">
        <label htmlFor="branch" className="text-base text-[#666]">Branch</label>
        <select id="branch" className="w-full appearance-none bg-transparent text-[21px] leading-8 outline-none">
          <option>DEMO BRANCH</option>
        </select>
        <MdArrowDropDown className="pointer-events-none absolute right-3 top-[22px] size-8 text-[#757575]" />
      </div>
      <button
        aria-label="Refresh"
        className="flex h-12 w-[86px] items-center rounded-md bg-[#3f51b5] pl-[21px] text-white shadow-md"
      >
        <MdAutorenew className="size-8" />
      </button>
    </div>
  );
}

function Tabs() {
  return (
    <div role="tablist" className="flex h-16 shrink-0 bg-[#3f51b5]">
      {TABS.map((tab, i) => (
        <button
          key={tab}
          role="tab"
          aria-selected={i === 0}
          className={clsx(
            "w-[214px] border-b-4 text-[19px] font-medium",
            i === 0 ? "border-[#f2f3f8] bg-[#d4af37] text-black" : "border-transparent text-white/70"
          )}
        >
          {tab}
        </button>
      ))}
    </div>
  );
}

function Stat({ label, value, className }: { label: string; value: string; className: string }) {
  return (
    <div className={clsx("text-center text-[21px] leading-[25px] font-bold", className)}>
      <p>{label}</p>
      <p className="text-[#3f51b5]">{value}</p>
    </div>
  );
}

function Total({ children, value, bold }: { children: ReactNode; value: string; bold?: boolean }) {
  return (
    <div className="flex flex-1 flex-col items-center border-l border-gray-300 text-[21px] leading-6">
      {children}
      <span className={clsx(bold && "font-bold")}>{value}</span>
    </div>
  );
}

function PlanCard() {
  return (
    <section className="w-[921px] shrink-0 self-start rounded-md bg-white px-[21px] pt-[17px] pb-[22px] shadow-md">
      <h2 className="text-2xl leading-8 font-medium">Plan</h2>
      <div className="mt-[15px] flex bg-[#eee] py-2">
        <Stat label="Scheduled" value="181" className="w-[276px] pr-4" />
        <Stat label="Unscheduled" value="1" className="w-[290px] border-x border-gray-300" />
        <Stat label="Total" value="182" className="grow pr-4" />
      </div>
      <div className="flex h-[96px] items-center pl-8">
        <Checkbox label="Select all drivers" />
        <div className="ml-auto flex pb-2 text-[#acacac]">
          <IconButton label="Unschedule" icon={MdUpdate} />
          <IconButton label="Shuffle" icon={MdShuffle} />
          <IconButton label="Swap" icon={MdSwapHoriz} />
          <IconButton label="Show on map" icon={MdMap} />
          <IconButton label="Move" icon={MdEvent} />
          <IconButton label="Unlock all" icon={MdLockOpen} className="text-[#212121]" />
        </div>
      </div>
      <ul>
        {DRIVERS.map((driver) => (
          <li key={driver.name} className="flex h-[99px] items-center pl-8">
            <Checkbox label={`Select ${driver.name}`} />
            <MdLocationOn className={clsx("mx-[45px] size-8 shrink-0", driver.pin)} />
            <div className="-ml-9 text-[21px] leading-[25px]">
              <p className="font-bold">{driver.name}</p>
              <p>{driver.info}</p>
            </div>
            <div className="ml-auto flex pb-2">
              <IconButton label="Directions" icon={MdDirections} className="text-[#acacac]" />
              <IconButton label="Unlock" icon={MdLockOpen} />
            </div>
          </li>
        ))}
      </ul>
      <div className="mt-1 flex bg-[#eee] py-[9px]">
        <p className="w-[154px] self-center pr-3 text-center text-[21px] font-bold">Totals</p>
        <Total value="19" bold>
          <MdDirections className="size-8" />
        </Total>
        <Total value="91 hr 50 min">
          <StopwatchIcon className="size-8" />
        </Total>
        <Total value="4,489.85 mi">
          <MdSettingsEthernet className="size-8" />
        </Total>
      </div>
    </section>
  );
}

function ToolButton({ icon: Icon, children }: { icon: IconType; children: ReactNode }) {
  return (
    <button disabled className="flex h-12 items-center gap-2 rounded-md bg-[#e2e2e2] pl-4 pr-5 text-[19px] font-medium text-[#9b9b9b]">
      <Icon className="size-8" />
      {children}
    </button>
  );
}

function OrdersToolbar() {
  const toggles = [
    { label: "Show depots", icon: MdPinDrop },
    { label: "Show unscheduled", icon: MdNotListedLocation },
    { label: "Show stops", icon: MdLocationOn },
    { label: "Show map", icon: MdMap },
  ];
  return (
    <div className="flex items-start">
      <div className="mr-7 flex h-[76px] w-[331px] items-start border-b border-[#777] px-[10px] pt-[10px]">
        <div className="flex grow flex-col">
          <label htmlFor="delivery-date" className="text-base leading-6 text-[#666]">Delivery Date</label>
          <input id="delivery-date" defaultValue="01/07/2026" className="w-full text-[22px] leading-7 outline-none" />
        </div>
        <button aria-label="Open calendar" className="mr-4 mt-2 text-[#666]">
          <MdToday className="size-8" />
        </button>
      </div>
      <div className="mt-8 flex gap-[17px]">
        <ToolButton icon={MdUpdate}>Unschedule Order</ToolButton>
        <ToolButton icon={MdEvent}>Move Order</ToolButton>
        <ToolButton icon={MdAssignmentInd}>Assign Order</ToolButton>
      </div>
      <div className="ml-auto mt-[21px] flex divide-x divide-[#a9b8e8] overflow-hidden rounded-md border border-[#cfd8f5] bg-[#c1d0fb] text-[#3949ab]">
        {toggles.map(({ label, icon }) => (
          <IconButton key={label} label={label} icon={icon} />
        ))}
      </div>
      <input
        type="search"
        aria-label="Search orders"
        placeholder="Search"
        className="ml-[17px] h-[76px] w-[262px] border-b border-[#777] px-[10px] text-[21px] outline-none placeholder:text-[#757575]"
      />
    </div>
  );
}

function OrderRow({ order, index }: { order: Order; index: number }) {
  const link = "font-medium text-[#3f51b5]";
  return (
    <tr
      className={clsx(
        "border-t odd:h-[69px] even:h-[70px]",
        index === 0 ? "border-gray-300 bg-[#cbcbcb]" : "border-[#d0d0d0]",
        index > 0 && index % 2 === 1 && "bg-[#f5f5f5]"
      )}
    >
      <td>
        <MdDragIndicator className="size-8" />
      </td>
      <td className="pl-[18px]">
        <Checkbox label={`Select order ${order.id}`} />
      </td>
      <td>
        {order.id}{" "}
        <a href={`#order-${order.id}`} className={link}>
          {order.refs}
        </a>
      </td>
      <td className="leading-[27px]">
        {order.type[0]}
        <br />
        {order.type[1]}
      </td>
      <td>
        <a href={`#patient-${order.id}`} className={link}>
          {order.name}
        </a>
      </td>
      <td className="leading-[27px]">
        180 Tamarack Circle
        <br />
        Skillman, NJ 08558
      </td>
      <td className="leading-9 whitespace-nowrap">
        <div className="-my-2">
          01/07/2026
          <br />
          {order.window}
        </div>
      </td>
      <td>
        {order.driver && (
          <div className="flex items-center gap-[14px] pl-1">
            <span className={clsx("size-[22px] rounded-full", order.dot)} />
            <a href={`#driver-${order.id}`} className={link}>
              {order.driver}
            </a>
          </div>
        )}
      </td>
      <td>{order.stop}</td>
      <td className="text-right">{order.time}</td>
      <td className="pl-14 text-[#3f51b5]">
        <div className="-my-2 flex pb-2">
          {order.driver ? (
            <>
              <IconButton label="Edit" icon={MdEdit} />
              <IconButton label="Unschedule" icon={MdUpdate} />
            </>
          ) : (
            <IconButton label="Assign" icon={MdAssignmentInd} />
          )}
        </div>
      </td>
    </tr>
  );
}

function OrdersTable() {
  const heads = ["Type", "Name", "Address", "Time Window", "Driver", "Stop"];
  return (
    <table className="mt-5 w-full table-fixed border-collapse border-b border-[#d0d0d0] text-[19px]">
      <colgroup>
        <col className="w-[46px]" />
        <col className="w-[90px]" />
        <col />
        <col className="w-[109px]" />
        <col className="w-[262px]" />
        <col className="w-[574px]" />
        <col className="w-[217px]" />
        <col className="w-[267px]" />
        <col className="w-[75px]" />
        <col className="w-[135px]" />
        <col className="w-[210px]" />
      </colgroup>
      <thead>
        <tr className="h-[77px] text-left">
          <th aria-label="Drag" />
          <th className="pl-[18px]">
            <Checkbox label="Select all orders" />
          </th>
          <th className="font-medium">Order ID</th>
          {heads.map((head) => (
            <th key={head} className="font-medium">
              {head}
            </th>
          ))}
          <th className="text-right font-medium whitespace-nowrap">Scheduled Time</th>
          <th className="pl-14 font-medium">Actions</th>
        </tr>
      </thead>
      <tbody>
        {ORDERS.map((order, index) => (
          <OrderRow key={order.id} order={order} index={index} />
        ))}
      </tbody>
    </table>
  );
}

export default function App() {
  return (
    <div className="flex h-screen flex-col overflow-hidden bg-[#f2f3f8] font-[Roboto,sans-serif] text-[#212121]">
      <TopBar />
      <div className="flex min-h-0 grow">
        <SideNav />
        <main className="flex min-w-0 grow flex-col pb-[5px] pl-5 pr-[13px]">
          <PageHeader />
          <Tabs />
          <div className="relative shrink-0">
            <DeliveryMap />
            <MapControls />
          </div>
          <div className="flex h-5 shrink-0 items-center justify-center bg-[#3f51b5]">
            <div className="w-10 border-y-4 border-dotted border-[#c5cae9]" />
          </div>
          <div className="flex min-h-0 grow">
            <div className="flex min-w-0 grow gap-[17px] overflow-hidden pt-4">
              <PlanCard />
              <section className="min-w-0 grow self-start rounded-md bg-white px-[22px] pt-[17px] pb-6 shadow-md">
                <h2 className="text-2xl leading-8 font-medium">Orders</h2>
                <div className="mt-[17px]">
                  <OrdersToolbar />
                </div>
                <OrdersTable />
              </section>
            </div>
            {/* Scroll track */}
            <div aria-hidden className="flex w-[23px] shrink-0 flex-col items-center bg-[#fafafa] text-[#8b8b8b]">
              <MdArrowDropUp className="size-7" />
              <div className="h-[100px] w-[13px] rounded-full bg-[#8b8b8b]" />
              <MdArrowDropDown className="mt-auto size-7" />
            </div>
          </div>
        </main>
      </div>
    </div>
  );
}
